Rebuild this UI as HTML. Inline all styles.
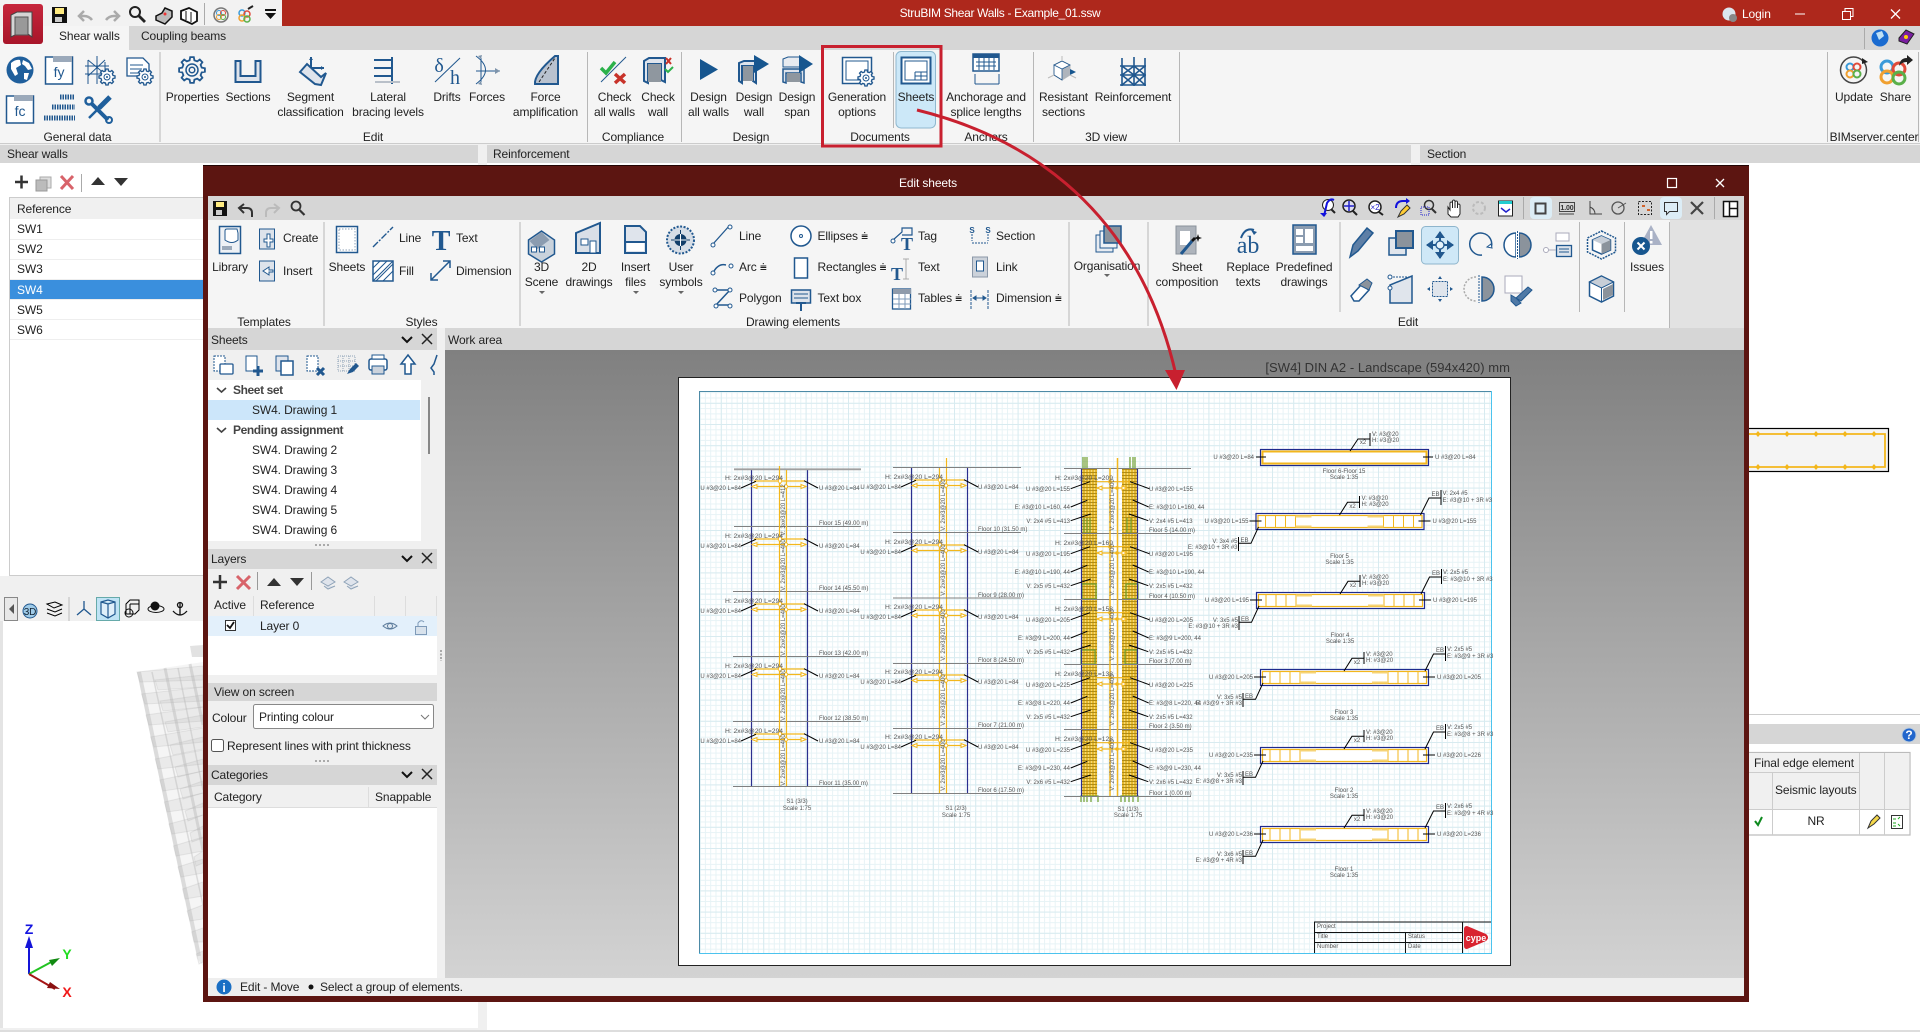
<!DOCTYPE html>
<html lang="en"><head><meta charset="utf-8"><title>StruBIM Shear Walls</title>
<style>
html,body{margin:0;padding:0;width:1920px;height:1032px;overflow:hidden;background:#fff}
svg{display:block}
text{font-family:"Liberation Sans",sans-serif;font-size:12px;fill:#222;letter-spacing:-.12px}
.m{text-anchor:middle}.e{text-anchor:end}.w{fill:#fff}.b{font-weight:bold;fill:#444;letter-spacing:-.4px}
.s{fill:none;stroke:#21588f;stroke-width:2}.s1{fill:none;stroke:#21588f;stroke-width:1}
.f{fill:#dfe4ec;stroke:#21588f;stroke-width:2}.g{fill:#8f979f;stroke:#21588f;stroke-width:1.5}
.d text{font-size:6px;fill:#555;letter-spacing:0}.d text.h{font-size:6.7px}
.y{fill:none;stroke:#f3b71c;stroke-width:1.2}.k{fill:none;stroke:#000;stroke-width:1}
.k2{fill:none;stroke:#111;stroke-width:2}.bl{fill:none;stroke:#2b2f8f;stroke-width:1.2}.fl{stroke:#808080;stroke-width:1}
</style></head><body>
<svg width="1920" height="1032" viewBox="0 0 1920 1032" xmlns="http://www.w3.org/2000/svg">
<defs>
<linearGradient id="cv" x1="0" y1="0" x2="0" y2="1"><stop offset="0" stop-color="#808080"/><stop offset="1" stop-color="#d3d3d3"/></linearGradient>
<linearGradient id="ab" x1="0" y1="0" x2="0" y2="1"><stop offset="0" stop-color="#c6263c"/><stop offset="1" stop-color="#a8162a"/></linearGradient>
<pattern id="gr" width="5.3" height="5.3" patternUnits="userSpaceOnUse"><path d="M0 .5H5.300M.5 0V5.300" stroke="#e7f3f6" stroke-width="1" fill="none"/></pattern>
<pattern id="gr2" width="21.2" height="21.2" patternUnits="userSpaceOnUse"><path d="M0 .5H21.200M.5 0V21.200" stroke="#d8ebf0" stroke-width="1" fill="none"/></pattern>
<pattern id="rb" width="3" height="3" patternUnits="userSpaceOnUse"><rect width="3" height="3" fill="#f4d974"/><path d="M1 0V3" stroke="#e0aa10" stroke-width="1.400"/><path d="M0 1.500H3" stroke="#a9860f" stroke-width=".9"/></pattern>
<g id="c1"><path class="y" d="M3 12H54M1 17.500H55"/><path d="M1 17.500l5-2v4zM55 17.500l-5-2v4zM29 9l2 3-2 3-2-3zM35 15l2 2.500-2 2.500-2-2.500z" fill="#fff" stroke="#f3b71c"/><path class="k" d="M-10 19L5 12.300M53 11.700L67 19"/></g>
<g id="c3"><path class="y" d="M15 13.700H48M15 20H45"/><path d="M15 20l5-2v4zM45 20l-5-2v4z" fill="#fff" stroke="#f3b71c"/><circle cx="28" cy="13.700" r="1.800" fill="#f3b71c"/><circle cx="35" cy="20" r="1.800" fill="#f3b71c"/><path class="k" d="M-11.300 20.700L8 13.700M48 13.700L67.300 20.700M-11.300 39L5.300 32.300M50.700 32L66.700 39M-11.300 52.700L8.700 46M47 46L66.300 52.700"/></g>
<g id="sec"><rect x=".5" y=".5" width="168" height="16" fill="#fff" stroke="#1e2a8e" stroke-width="1.200"/><rect x="2.500" y="2.500" width="164" height="12" fill="none" stroke="#f3b71c" stroke-width="1.200"/><path d="M10 3V14M20 3V14M30 3V14M40 3V14M128 3V14M138 3V14M148 3V14M158 3V14" stroke="#f3b71c" fill="none"/><path d="M40 3.500H56M40 13.500H56M112 3.500H128M112 13.500H128" stroke="#f6d376" stroke-width="2" fill="none"/><path class="k" d="M-6 8H6M163 8H175M84 2L92-10.700H104M104-17V-5M165 2L173.500-15H185.500M185.500-23V-8M3 14L-4.500 30.300H-17M-17 24V38"/></g>
<path id="x" d="M-5-5L5 5M5-5L-5 5" fill="none" stroke="#222" stroke-width="1.500"/>
<path id="v" d="M-5-3L0 2 5-3" fill="none" stroke="#111" stroke-width="2"/>
<path id="gp" d="M9.700-2.400L12.900-1.800V1.800L9.700 2.400 8.600 5.200 10.400 7.800 7.800 10.400 5.200 8.600 2.400 9.700 1.800 12.900H-1.800L-2.400 9.700-5.200 8.600-7.800 10.400-10.400 7.800-8.600 5.200-9.700 2.400-12.900 1.800V-1.800L-9.700-2.400-8.600-5.200-10.400-7.800-7.800-10.400-5.200-8.600-2.400-9.700-1.800-12.900H1.800L2.400-9.700 5.200-8.600 7.800-10.400 10.400-7.800 8.600-5.200Z"/>
<g id="gear"><use href="#gp" transform="scale(.62)" fill="#fff" stroke="#21588f" stroke-width="2.200"/><circle r="3" fill="none" stroke="#21588f"/><circle r="1" fill="#21588f"/></g>
</defs>

<!-- background -->
<rect width="1920" height="1032" fill="#f0f0f0"/>
<rect x="0" y="0" width="282" height="26" fill="#f2f2f2"/>
<rect x="282" y="0" width="1638" height="26" fill="#ae281c"/>
<rect x="129" y="26" width="1791" height="24" fill="#d6d6d6"/>
<rect x="0" y="26" width="129" height="24" fill="#f5f5f5"/>
<rect x="0" y="50" width="1920" height="94" fill="#f5f5f5"/>
<rect x="0" y="143" width="1920" height="1" fill="#ccc"/>
<rect x="0" y="145" width="478" height="18" fill="#d6d6d6"/>
<rect x="487" y="145" width="924" height="18" fill="#d6d6d6"/>
<rect x="1420" y="145" width="500" height="18" fill="#d6d6d6"/>
<rect x="0" y="163" width="478" height="865" fill="#fff"/>
<rect x="487" y="163" width="924" height="867" fill="#fff"/>
<rect x="1420" y="163" width="500" height="552" fill="#fff"/>
<rect x="1420" y="715" width="500" height="317" fill="#fff"/>
<rect x="487" y="1000" width="1433" height="30" fill="#fff"/>
<rect x="1420" y="714" width="500" height="1" fill="#ccc"/>
<rect x="1420" y="724" width="500" height="20" fill="#d6d6d6"/>

<!-- app button + qat -->
<rect x="3" y="4" width="40" height="40" rx="3" fill="url(#ab)"/>
<path d="M11 15L17 12H32V37L28 34V19H15V35L11 37Z" fill="#d5d5d5" stroke="#444"/><rect x="15" y="17" width="13" height="18" fill="#999" stroke="#555"/>
<g><rect x="52" y="7" width="15" height="16" fill="#111"/><rect x="55" y="8" width="9" height="6" fill="#ffeb80"/><rect x="55" y="17" width="7" height="5" fill="#ccc"/>
<path d="M84 21l-5-5 5-5M80 16h4q5 0 8 4" fill="none" stroke="#aaa" stroke-width="2.500"/><path d="M114 21l5-5-5-5M118 16h-4q-5 0-8 4" fill="none" stroke="#aaa" stroke-width="2.500"/>
<circle cx="135" cy="12" r="5" fill="none" stroke="#222" stroke-width="2"/><path d="M139 16l6 6" stroke="#222" stroke-width="2.800"/>
<path d="M156 16l6-3 3-5 7 3v6l-7 7-9-4z" fill="#bbb" stroke="#111" stroke-width="1.500"/><circle cx="165" cy="14" r="1.500" fill="#e33"/>
<path d="M181 11l8-3 8 4v9l-5 3-11-5z" fill="#fff" stroke="#111" stroke-width="1.800"/><path d="M186 11v9M191 12v10" stroke="#111"/>
<rect x="204" y="3" width="1" height="22" fill="#aaa"/>
<circle cx="221" cy="15" r="7" fill="none" stroke="#777" stroke-width="1.500"/><circle cx="219" cy="13" r="2.500" fill="none" stroke="#3a9ad9"/><circle cx="223" cy="13" r="2.500" fill="none" stroke="#e04a3a"/><circle cx="219" cy="17" r="2.500" fill="none" stroke="#f0a030"/><circle cx="223" cy="17" r="2.500" fill="none" stroke="#5ab04a"/>
<circle cx="242" cy="13" r="3" fill="none" stroke="#3a9ad9" stroke-width="1.500"/><circle cx="247" cy="14" r="3" fill="none" stroke="#e04a3a" stroke-width="1.500"/><circle cx="242" cy="18" r="3" fill="none" stroke="#f0a030" stroke-width="1.500"/><circle cx="247" cy="19" r="3" fill="none" stroke="#5ab04a" stroke-width="1.500"/><path d="M248 9l5-3" stroke="#222" stroke-width="2"/>
<path d="M265 9h11v2h-11zM265 13h11l-5.500 6z" fill="#111"/></g>
<text x="59" y="40">Shear walls</text><text x="141" y="40">Coupling beams</text>
<text x="1000" y="17" class="m w" style="letter-spacing:-.32px">StruBIM Shear Walls - Example_01.ssw</text>
<circle cx="1729" cy="14" r="6.500" fill="#dbe6ee"/><circle cx="1733" cy="18" r="4" fill="#888"/><text x="1742" y="18" class="w">Login</text>
<path d="M1795 14H1805" stroke="#fff"/><path d="M1842.500 11.500h8v8h-8zM1845 11v-2.500h8v8h-2.500" fill="none" stroke="#fff"/><path d="M1891 9.500l9 9M1900 9.500l-9 9" stroke="#fff" stroke-width="1.300"/>
<rect x="1864" y="28" width="1" height="21" fill="#aaa"/><circle cx="1880" cy="38" r="8.500" fill="#1a6bd0"/><path d="M1876 33l6-2 2 5-5 4z" fill="#bfe0f5"/><path d="M1899 38l7-8 8 4-7 10-8-3z" fill="#7b1fa2" stroke="#222"/><circle cx="1906" cy="37" r="2" fill="#ffd400"/>

<!-- main ribbon separators -->
<g fill="#b7b7b7"><rect x="159.500" y="52" width="1" height="90"/><rect x="587" y="52" width="1" height="90"/><rect x="681" y="52" width="1" height="90"/><rect x="893" y="52" width="1" height="76"/><rect x="1033" y="52" width="1" height="90"/><rect x="1179" y="52" width="1" height="90"/><rect x="1827" y="52" width="1" height="90"/><rect x="1918" y="52" width="1" height="90"/></g>
<rect x="896" y="51.500" width="39.500" height="76.500" rx="5" fill="#cce8f8" stroke="#8fb8cf"/>

<!-- main ribbon icons -->
<g>
<circle cx="20" cy="70" r="13.500" fill="#1f5f9c"/><path d="M11 63q5-4 9-3l1 5-5 3 2 6-3 2-4-7zM23 60l6 3 3 6-4 1-3-4-3-2zM24 73l5 0-2 7-3-1z" fill="#fff"/>
<path d="M45.500 57h27v27h-27z" fill="#fff" stroke="#21588f" stroke-width="1.500"/><path d="M53 56h19v6H53z" fill="#9ba9ba"/><text x="59" y="77" class="m" style="font-size:14px;fill:#21588f">fy</text>
<path class="s1" d="M88 84V60M97 84V56M105 84V62M85 66h24M85 74h18M88 60l17 14M105 60l-17 16" stroke-width="1.500"/><use href="#gear" x="107" y="77"/>
<path d="M127 58h16l6 6v12h-22z" fill="#fff" stroke="#21588f" stroke-width="1.300"/><path class="s1" d="M130 65h13M130 69h12M130 73h10"/><use href="#gear" x="145" y="77"/>
<path d="M6.500 96h27v27h-27z" fill="#fff" stroke="#21588f" stroke-width="1.500"/><path d="M14 95h19v6H14z" fill="#9ba9ba"/><text x="20" y="116" class="m" style="font-size:14px;fill:#21588f">fc</text>
<g stroke="#21588f" stroke-dasharray="1.500 1" fill="none"><path stroke-width="5" d="M60 97h15M52 107h23M44 118h31"/></g>
<path d="M92 104l16 16" stroke="#1f5f9c" stroke-width="4"/><circle cx="89" cy="101" r="3.500" fill="none" stroke="#1f5f9c" stroke-width="2.500"/><circle cx="109" cy="120" r="3" fill="none" stroke="#1f5f9c" stroke-width="2"/><path d="M89 118l11-11" stroke="#1f5f9c" stroke-width="2.500"/><path d="M99 108l11-11" stroke="#1f5f9c" stroke-width="5"/>
<g transform="translate(192 70)"><use href="#gp" fill="#f5f5f5" stroke="#21588f" stroke-width="1.800"/><circle r="6" fill="none" stroke="#21588f" stroke-width="1.500"/><circle r="2.800" fill="none" stroke="#21588f" stroke-width="1.500"/></g>
<path class="f" d="M235.500 61v21h25V61h-5v15h-15V61z"/>
<path class="f" d="M300 72l7-8 14 13 5-4-5 12-6-1zM311 68V57M311 68h13"/>
<path d="M311 57l-2 3h4zM324 68l-3-2v4z" fill="#21588f"/>
<path class="s" d="M392 57V84M374 60h18M374 68h18M374 76h18"/><path d="M375 82h25" stroke="#b9c0c9" stroke-width="2"/>
<text x="439" y="72" class="m" style="font-family:'Liberation Serif',serif;font-size:20px;fill:#21588f">δ</text><path class="s1" d="M435 82L460 58"/><text x="455" y="84" class="m" style="font-family:'Liberation Serif',serif;font-size:20px;fill:#21588f">h</text>
<path class="s1" d="M476 56q19 14 0 28M476 71h24M481 58v24" stroke-width="1.500"/><path d="M500 71l-5-3v6zM478 56l4-1-1 4zM478 84l4 1-1-4z" fill="#7e94ab"/>
<path d="M535 84q-1-10 20-28l3 0V84z" fill="#b9c2cf" stroke="#21588f" stroke-width="2"/><path d="M539 82l16-24" stroke="#222" stroke-dasharray="3 2" fill="none"/>
<path d="M601 68l5 5 9-11" stroke="#2bb14a" stroke-width="3.500" fill="none"/><path d="M601 82l25-25" stroke="#21588f"/><path d="M615 74l10 9M625 74l-10 9" stroke="#c8332a" stroke-width="3.500"/>
<path class="f" d="M644 61l5-3h16v24l-4-2V64h-13v19l-4-2z"/><rect x="648" y="64" width="13" height="18" fill="#8f979f"/><path d="M666 58l5 6M671 58l-5 6" stroke="#c8332a" stroke-width="2"/><path d="M665 69l3 3 5-5" stroke="#2bb14a" stroke-width="2" fill="none"/>
<path d="M700 59l18 10.500-18 10.500z" fill="#17568f"/>
<path class="f" d="M739 63l5-2h12v22l-3-2V66h-11v17l-3-2z"/><rect x="743" y="66" width="10" height="15" fill="#8f979f"/><path d="M754 55l15 9-15 9z" fill="#17568f"/>
<path class="f" style="fill:#e8ebf0;stroke-width:1" d="M783 59l5-2h12v10H783z"/><path class="f" style="stroke-width:1.500" d="M783 69h21v14l-3-1V73h-15v10l-3-1z"/><rect x="787" y="73" width="13" height="9" fill="#8f979f"/><path d="M799 55l14 9-14 9z" fill="#17568f"/>
<rect x="842.500" y="57.500" width="29" height="26" fill="#fff" stroke="#21588f" stroke-width="1.500"/><rect x="846" y="61" width="22" height="19" fill="none" stroke="#21588f"/><use href="#gear" x="866" y="78" />
<rect x="901.500" y="57.500" width="29" height="26" fill="#fff" stroke="#21588f" stroke-width="2"/><rect x="905" y="61" width="22" height="19" fill="none" stroke="#21588f"/><path class="s1" d="M915 72h12M915 76h12M915 72v8M921 72v8"/>
<rect x="973" y="54" width="26" height="17" fill="#fff" stroke="#21588f" stroke-width="1.500"/><rect x="973" y="54" width="26" height="4" fill="#21588f"/><path d="M976 62h20M976 66h20M979 58v12M984 58v12M989 58v12M994 58v12" stroke="#21588f"/><path class="s1" d="M975 74v10M999 74v10M975 84h24"/>
<path style="stroke:#bbb;stroke-width:1;fill:#fff" d="M1054 65l8-4 8 4v10l-8 5-8-5z"/><path d="M1062 69l8-4v10l-8 5z" fill="#aeb4bc"/><path d="M1054 65l8 4v11l-8-5zM1054 65l8-4 8 4-8 4z" fill="none" stroke="#21588f" stroke-width=".8"/><path d="M1070 69l6 3-6 3z" fill="#17568f"/><path stroke="#bbb" d="M1062 56v5M1048 78l6-3M1076 78l-6-3"/>
<path class="s1" style="stroke-width:1.600" d="M1122 58v28M1134 57v29M1145 58v28M1120 66h26M1120 75h26M1120 85h26M1122 66l12 9M1134 66l-12 9M1134 66l11 9M1145 66l-11 9M1122 75l12 10M1134 75l-12 10M1134 75l11 10M1145 75l-11 10"/>
<circle cx="1853.500" cy="70" r="13" fill="none" stroke="#444" stroke-width="1.500"/><path d="M1862 58l6 4-6 2z" fill="#222"/><circle cx="1850" cy="67" r="3.500" fill="none" stroke="#3a9ad9" stroke-width="2"/><circle cx="1857" cy="67" r="3.500" fill="none" stroke="#e04a3a" stroke-width="2"/><circle cx="1850" cy="74" r="3.500" fill="none" stroke="#f0a030" stroke-width="2"/><circle cx="1857" cy="74" r="3.500" fill="none" stroke="#5ab04a" stroke-width="2"/>
<circle cx="1887" cy="67" r="6" fill="none" stroke="#3a9ad9" stroke-width="3"/><circle cx="1899" cy="69" r="6" fill="none" stroke="#e04a3a" stroke-width="3"/><circle cx="1887" cy="77" r="6" fill="none" stroke="#f0a030" stroke-width="3"/><circle cx="1899" cy="78" r="6" fill="none" stroke="#5ab04a" stroke-width="3"/><path d="M1899 66q1-8 8-8v-3l6 5-6 5v-3q-5 0-8 4z" fill="#222"/>
</g>

<!-- main ribbon labels -->
<g class="m" text-anchor="middle">
<text x="192.500" y="101">Properties</text><text x="248" y="101">Sections</text><text x="310.500" y="101">Segment</text><text x="310.500" y="116">classification</text>
<text x="388" y="101">Lateral</text><text x="388" y="116">bracing levels</text><text x="447" y="101">Drifts</text><text x="487" y="101">Forces</text>
<text x="545.500" y="101">Force</text><text x="545.500" y="116">amplification</text><text x="614.500" y="101">Check</text><text x="614.500" y="116">all walls</text>
<text x="658" y="101">Check</text><text x="658" y="116">wall</text><text x="708.500" y="101">Design</text><text x="708.500" y="116">all walls</text>
<text x="754" y="101">Design</text><text x="754" y="116">wall</text><text x="797" y="101">Design</text><text x="797" y="116">span</text>
<text x="857" y="101">Generation</text><text x="857" y="116">options</text><text x="916" y="101">Sheets</text>
<text x="986" y="101">Anchorage and</text><text x="986" y="116">splice lengths</text><text x="1063.500" y="101">Resistant</text><text x="1063.500" y="116">sections</text><text x="1133" y="101">Reinforcement</text>
<text x="1854" y="101">Update</text><text x="1895.500" y="101">Share</text>
<text x="77.500" y="141">General data</text><text x="373" y="141">Edit</text><text x="633" y="141">Compliance</text><text x="751" y="141">Design</text><text x="880" y="141">Documents</text><text x="986" y="141">Anchors</text><text x="1106" y="141">3D view</text><text x="1874" y="141">BIMserver.center</text>
</g>
<text x="7" y="158">Shear walls</text><text x="493" y="158">Reinforcement</text><text x="1427" y="158">Section</text>

<!-- left panel -->
<path d="M15 182h13M21.500 175.500v13" stroke="#333" stroke-width="2.500"/><rect x="40" y="177" width="11" height="11" fill="#ddd" stroke="#aaa"/><rect x="36" y="180" width="11" height="11" fill="#bbb" stroke="#999"/><path d="M61 176l12 13M73 176l-12 13" stroke="#d8636a" stroke-width="3"/><rect x="81" y="174" width="1" height="18" fill="#aaa"/><path d="M91 185l7-8 7 8zM114 178h14l-7 8z" fill="#333"/>
<rect x="9.500" y="197.500" width="468" height="378" fill="#fff" stroke="#ccc"/>
<rect x="10" y="198" width="467" height="21" fill="#f0f0f0"/><text x="17" y="213">Reference</text>
<rect x="10" y="280" width="200" height="19" fill="#3a8fdd"/>
<g stroke="#eee"><path d="M10 239.500H203M10 259.500H203M10 279.500H203M10 299.500H203M10 319.500H203M10 339.500H203"/></g>
<text x="17" y="233">SW1</text><text x="17" y="253">SW2</text><text x="17" y="273">SW3</text><text x="17" y="294" class="w">SW4</text><text x="17" y="314">SW5</text><text x="17" y="334">SW6</text>
<rect x="0" y="576" width="478" height="17" fill="#f0f0f0"/>
<rect x="0" y="593" width="478" height="28" fill="#f0f0f0"/><rect x="0" y="621" width="3" height="407" fill="#e4e4e4"/>
<rect x="4.500" y="597.500" width="13" height="23" fill="#e8e8e8" stroke="#888"/><path d="M14 604l-5 5 5 5z" fill="#555"/>
<circle cx="30" cy="611" r="7" fill="#9fcbe8" stroke="#21588f"/><text x="30" y="615" class="m" style="font-size:10px;fill:#123">3D</text>
<path class="k" d="M47 604l8-2 7 3-8 3zM47 609l8 3 7-3M47 613l8 3 7-3" stroke-width="1.200"/><rect x="68.500" y="597" width="1" height="24" fill="#bbb"/>
<path d="M84 609v-8M84 609l-7 6M84 609l7 6" stroke="#21588f" fill="none" stroke-width="1.300"/>
<rect x="96.500" y="597.500" width="23" height="23" fill="#bfe3f5" stroke="#6aa"/><path d="M101 602l7-2 7 2v12l-7 4-7-4zM108 604v14M101 602l7 2 7-2" fill="#dfeffa" stroke="#21588f" stroke-width="1.200"/>
<path class="k" d="M126 604l4-4h9v10l-4 4h-9zM130 604h9M130 604v10M126 604" stroke-width="1.200"/><circle cx="129" cy="613" r="4" fill="none" stroke="#111"/>
<ellipse cx="156" cy="609" rx="8" ry="3.500" fill="none" stroke="#111"/><circle cx="155" cy="606" r="4.500" fill="#111"/>
<circle cx="180" cy="605" r="2.500" fill="none" stroke="#111" stroke-width="1.300"/><path d="M180 603v12M173 611q7 8 14 0" fill="none" stroke="#111" stroke-width="1.300"/>
<!-- 3D building -->
<path d="M137 672L203 662V966L197 958Z" fill="#d0d0d0" fill-opacity=".22"/>
<path d="M190 646l13-1v12h-11z" fill="#e2e2e2"/>
<g fill="#808080" fill-opacity=".09" stroke="#a8a8a8" stroke-opacity=".22">
<path d="M137 672L203 666V680L140 682Z"/><path d="M141.600 694L203 687V701L145 704Z"/><path d="M146 715L203 707V721L149 725Z"/><path d="M150.700 737L203 728V742L154 747Z"/><path d="M155.300 759L203 750V764L158 769Z"/><path d="M159.800 780L203 771V785L163 791Z"/><path d="M164.400 802L203 793V807L167 812Z"/><path d="M169 824L203 815V829L172 834Z"/><path d="M173.500 846L203 837V851L176 856Z"/><path d="M178 867L203 859V873L181 877Z"/><path d="M182.600 889L203 882V896L185 899Z"/><path d="M187.200 911L203 905V919L190 921Z"/><path d="M191.700 932L203 928V942L194 942Z"/><path d="M196.300 954L203 951V962L199 964Z"/>
<path d="M155 680L203 675V687L158 690Z"/><path d="M160 701L203 695V707L163 711Z"/><path d="M165 722L203 715V727L168 732Z"/><path d="M170 745L203 737V749L173 755Z"/><path d="M175 767L203 759V771L178 777Z"/><path d="M180 789L203 781V793L183 799Z"/><path d="M185 811L203 803V815L188 821Z"/><path d="M190 833L203 826V838L192 842Z"/><path d="M194 857L203 851V863L196 866Z"/>
</g>
<g fill="none" stroke="#b5b5b5" stroke-opacity=".4"><path d="M139 672L199 956" stroke-width="4"/><path d="M152 672L203 905" stroke-width="1.500"/><path d="M165 668L203 850" stroke-width="3"/><path d="M178 668L203 790" stroke-width="1.500"/><path d="M190 664L203 725" stroke-width="3"/></g>
<!-- axes -->
<path d="M29 974V945" stroke="#1414d8" stroke-width="2"/><path d="M29 936l-4 12h8z" fill="#1414d8"/><text x="29" y="934" class="m" style="font-size:14px;font-weight:bold;fill:#1414e0">Z</text>
<path d="M29 974L55 960" stroke="#22c322" stroke-width="2"/><path d="M60 958l-11 2 3 6z" fill="#118a11"/><text x="67" y="959" class="m" style="font-size:14px;font-weight:bold;fill:#22dd22">Y</text>
<path d="M29 974L55 989" stroke="#a51414" stroke-width="2"/><path d="M60 989l-10-7-3 6z" fill="#8a1010"/><text x="67" y="997" class="m" style="font-size:14px;font-weight:bold;fill:#f01818">X</text>

<!-- right side section preview -->
<rect x="1740" y="428.500" width="148.500" height="43" fill="#f4f4f4" stroke="#000" stroke-width="1.200"/>
<path d="M1740 434H1885V467H1740" fill="none" stroke="#f3b71c" stroke-width="1.800"/>
<g fill="#f3b71c"><path d="M1758 431l2.500 3-2.500 3-2.500-3zM1787 431l2.500 3-2.500 3-2.500-3zM1816 431l2.500 3-2.500 3-2.500-3zM1845 431l2.500 3-2.500 3-2.500-3zM1874 431l2.500 3-2.500 3-2.500-3zM1758 464l2.500 3-2.500 3-2.500-3zM1787 464l2.500 3-2.500 3-2.500-3zM1816 464l2.500 3-2.500 3-2.500-3zM1845 464l2.500 3-2.500 3-2.500-3zM1874 464l2.500 3-2.500 3-2.500-3z"/></g>
<circle cx="1909" cy="735" r="7" fill="#2266cc" stroke="#bcd"/><text x="1909" y="739" class="m w" style="font-weight:bold">?</text>
<rect x="1745" y="752.500" width="165" height="82.500" fill="#fff" stroke="#bbb" stroke-width="1.200"/><rect x="1745" y="753" width="164" height="56" fill="#f0f0f0"/>
<g stroke="#ccc" fill="none"><path d="M1745 772.500H1859M1745 809.500H1910M1772.500 772V835M1859.500 753V835M1884.500 753V835"/></g>
<text x="1754" y="767">Final edge element</text><text x="1775" y="794">Seismic layouts</text><text x="1816" y="825" class="m">NR</text>
<path d="M1755 821l3 4 4-8" fill="none" stroke="#0e8a1e" stroke-width="2"/><path d="M1868 828l3-7 6-6 3 3-6 6z" fill="#f5d84a" stroke="#333"/><rect x="1891.500" y="815.500" width="11" height="13" fill="#fff" stroke="#333"/><path d="M1893 819h3M1893 823h3M1893 826h3M1898 819l2-2M1898 824l2 2" stroke="#2a2"/>

<!-- Edit sheets window -->
<rect x="203" y="165" width="1546" height="837" fill="#5c1511"/>
<rect x="203" y="165" width="1546" height="1" fill="#220504"/>
<rect x="208" y="196" width="1536" height="800" fill="#f0f0f0"/>
<text x="928" y="187" class="m w">Edit sheets</text>
<rect x="1667.500" y="178.500" width="9" height="9" fill="none" stroke="#fff" stroke-width="1.200"/><path d="M1716 179l8 8M1724 179l-8 8" stroke="#fff" stroke-width="1.300"/>
<rect x="208" y="196" width="1536" height="24" fill="#d6d6d6"/>
<rect x="208" y="220" width="1462" height="108" fill="#f5f5f5"/><rect x="1670" y="220" width="74" height="108" fill="#e2e2e2"/>
<rect x="208" y="328" width="229" height="22" fill="#d6d6d6"/><rect x="445" y="328" width="1299" height="22" fill="#d6d6d6"/>
<rect x="445" y="350" width="1299" height="628" fill="url(#cv)"/>
<rect x="208" y="978" width="1536" height="18" fill="#eee"/>
<!-- window qat -->
<rect x="213" y="201" width="14" height="15" fill="#111"/><rect x="216" y="202" width="8" height="5" fill="#ffeb80"/><rect x="216" y="210" width="6" height="5" fill="#ccc"/>
<path d="M244 213l-5-5 5-4M240 208h7q5 0 5 5v4" fill="none" stroke="#333" stroke-width="2"/><path d="M274 213l5-5-5-4M278 208h-7q-5 0-5 5v4" fill="none" stroke="#bbb" stroke-width="2"/>
<circle cx="296" cy="206" r="4.500" fill="none" stroke="#333" stroke-width="1.800"/><path d="M299.500 210l5 5" stroke="#333" stroke-width="2.200"/>
<g>
<circle cx="1328" cy="205" r="5.500" fill="#fff" stroke="#222"/><path d="M1324 216l3-13q3-5 7-3" fill="none" stroke="#11d" stroke-width="2"/><path d="M1320 213l4 4 3-4z" fill="#11d"/><path d="M1331 209l4 4" stroke="#222" stroke-width="2"/>
<circle cx="1349" cy="206" r="6" fill="#dde" stroke="#222" stroke-width="1.500"/><path d="M1349 201v10M1344 206h10" stroke="#22c" stroke-width="1.500"/><path d="M1353 211l4 4" stroke="#222" stroke-width="2"/>
<circle cx="1375" cy="207" r="6" fill="#fff" stroke="#222" stroke-width="1.500"/><text x="1375" y="210" class="m" style="font-size:8px;fill:#22c">×2</text><path d="M1379 212l4 3" stroke="#222" stroke-width="2"/>
<path d="M1396 208q0-7 7-7h4" fill="none" stroke="#11d" stroke-width="2"/><path d="M1410 201l-4-3v6z" fill="#11d"/><path d="M1398 217l3-6 6-6 3 3-6 6z" fill="#fc3" stroke="#333"/>
<circle cx="1429" cy="205" r="4.500" fill="none" stroke="#333" stroke-width="1.500"/><path d="M1432 209l4 4" stroke="#333" stroke-width="2"/><rect x="1421" y="207" width="8" height="8" fill="none" stroke="#22c" stroke-dasharray="1 1"/>
<path d="M1448 207v7l3 3h7l2-3v-9a1.300 1.300 0 0 0-2.500 0v3-6a1.300 1.300 0 0 0-2.500 0v6-7a1.300 1.300 0 0 0-2.500 0v7-5a1.300 1.300 0 0 0-2.500 0v7z" fill="#fff" stroke="#222"/>
<circle cx="1479" cy="208" r="6" fill="none" stroke="#bbb" stroke-width="2" stroke-dasharray="3 2"/>
<rect x="1498.500" y="201" width="14" height="15" fill="#fff" stroke="#222"/><rect x="1499" y="201" width="13" height="3" fill="#22ccd0"/><path d="M1501 208l5 4 4-3" fill="none" stroke="#22c" stroke-width="1.500"/>
<rect x="1523" y="197" width="1" height="22" fill="#aaa"/>
<rect x="1530" y="197" width="22" height="22" rx="4" fill="#dcedf6"/><rect x="1535.500" y="203.500" width="10" height="10" fill="none" stroke="#444" stroke-width="2"/>
<rect x="1559.500" y="202.500" width="15" height="9" fill="none" stroke="#444"/><text x="1567" y="210" class="m" style="font-size:7px;font-weight:bold;fill:#333">1.00</text><path d="M1559 214h15" stroke="#444"/>
<path d="M1590 201v13h12M1590 207q5 2 5 7" fill="none" stroke="#444"/>
<circle cx="1618" cy="208" r="6" fill="none" stroke="#555" stroke-width="1.300"/><path d="M1618 208l8-5" stroke="#555"/>
<rect x="1638.500" y="201.500" width="13" height="13" fill="none" stroke="#222" stroke-dasharray="2 1.500"/><rect x="1642" y="205" width="3" height="2" fill="#d2622a"/><rect x="1647" y="209" width="3" height="2" fill="#d2622a"/>
<rect x="1660" y="197" width="22" height="22" rx="4" fill="#dcedf6"/><path d="M1664.500 202.500h13v9h-8l-3 3v-3h-2z" fill="none" stroke="#333"/>
<path d="M1691 202l12 12M1703 202l-12 12" stroke="#444" stroke-width="2.200"/>
<rect x="1714" y="197" width="1" height="22" fill="#aaa"/>
<path d="M1723.500 201.500h6v15h-6zM1729.500 201.500h8v7h-8zM1729.500 208.500h8v8h-8z" fill="#fff" stroke="#111" stroke-width="1.500"/>
</g>
<!-- window ribbon seps -->
<g fill="#b7b7b7"><rect x="323.500" y="222" width="1" height="104"/><rect x="519.500" y="222" width="1" height="104"/><rect x="1068.500" y="222" width="1" height="104"/><rect x="1147.500" y="222" width="1" height="104"/><rect x="1339.500" y="222" width="1" height="90"/><rect x="1579" y="222" width="1" height="90"/><rect x="1624" y="222" width="1" height="90"/><rect x="1669" y="222" width="1" height="106"/></g>
<rect x="1421.500" y="226.500" width="37" height="37.500" rx="4" fill="#cfe8f7" stroke="#8eb5cc"/>
<!-- window ribbon icons -->
<g>
<rect x="219.500" y="226.500" width="21" height="27" fill="#eef1f5" stroke="#21588f" stroke-width="1.500"/><path d="M225 240v-9q0-2 2-2h10l1 4v7q-6 5-13 0z" fill="#fff" stroke="#21588f"/><rect x="222" y="246" width="10" height="4" fill="#9ba9ba"/>
<rect x="259.500" y="229" width="15" height="20" fill="#dde3eb" stroke="#21588f"/><path d="M264 239h3v-5h3v5h3v3h-3v5h-3v-5h-3z" fill="#fff" stroke="#21588f"/>
<rect x="259.500" y="261" width="15" height="20" fill="#dde3eb" stroke="#21588f"/><path d="M273 270h-4v-3l-6 4 6 4v-3h4z" fill="#fff" stroke="#21588f"/>
<rect x="336.500" y="226.500" width="21" height="26" fill="#fff" stroke="#21588f" stroke-width="1.500"/><rect x="339" y="229" width="16" height="21" fill="none" stroke="#8fa3b8" stroke-dasharray="1.500 1.500"/>
<path d="M373 247l20-20" stroke="#21588f" stroke-dasharray="7 1.500 2 1.500" fill="none" stroke-width="1.400"/>
<rect x="373" y="261" width="20" height="20" fill="#fff" stroke="#21588f" stroke-width="1.500"/><path d="M373 268l7-7M373 275l14-14M376 281l17-17M383 281l10-10M373 281l20-20" stroke="#21588f" fill="none"/>
<text x="441" y="250" class="m" style="font-family:'Liberation Serif',serif;font-weight:bold;font-size:28px;fill:#21588f">T</text>
<path class="s1" style="stroke-width:1.500" d="M431 280l19-19M431 273v7h7M443 261h7v7"/>
<g transform="translate(541.500 245)"><path d="M-13-5L0-14 13-5V9L0 17-13 9z" fill="#c9d2dc" stroke="#21588f" stroke-width="1.500"/><path d="M-12-4L0-13 8-5-4 4z" fill="#8b9cb0"/><rect x="-10" y="2" width="5" height="5" fill="#fff" stroke="#21588f"/><rect x="-2" y="2" width="5" height="5" fill="#fff" stroke="#21588f"/></g>
<path class="f" style="fill:#d9dfe7" d="M576 233l24-10v30h-24z"/><rect x="581" y="239" width="7" height="6" fill="#fff" stroke="#21588f"/><rect x="590" y="241" width="6" height="12" fill="#fff" stroke="#21588f"/>
<path class="f" d="M625 226h15l6 6v21h-21z"/><rect x="627" y="243" width="17" height="8" fill="#fff"/><path d="M625 242h21" stroke="#21588f" stroke-width="2"/>
<circle cx="680.500" cy="240" r="13.500" fill="#d6dde6" stroke="#21588f" stroke-width="2" stroke-dasharray="2 1.500"/><circle cx="680.500" cy="240" r="6" fill="#123e6a"/><path d="M680.500 230v20M671 240h19" stroke="#123e6a"/><path d="M680.500 234v12M674.500 240h12" stroke="#fff"/>
<path d="M713 244l17-19" stroke="#21588f" fill="none" stroke-width="1.300"/><circle cx="713" cy="245" r="2" fill="#fff" stroke="#21588f"/><circle cx="730" cy="227" r="2" fill="#fff" stroke="#21588f"/>
<path d="M713 273q5-10 13-8" stroke="#21588f" fill="none" stroke-width="1.500"/><circle cx="713" cy="273" r="2" fill="#fff" stroke="#21588f"/><circle cx="731" cy="266" r="2" fill="#fff" stroke="#21588f"/>
<path class="s1" style="stroke-width:1.500" d="M715 290h15L716 305h14"/><circle cx="715" cy="290" r="2" fill="#fff" stroke="#21588f"/><circle cx="730" cy="290" r="2" fill="#fff" stroke="#21588f"/><circle cx="716" cy="306" r="2" fill="#fff" stroke="#21588f"/><circle cx="730" cy="306" r="2" fill="#fff" stroke="#21588f"/>
<circle cx="801" cy="236" r="10" fill="#fff" stroke="#21588f" stroke-width="1.500"/><circle cx="801" cy="236" r="1.500" fill="none" stroke="#21588f"/>
<rect x="794.500" y="258" width="13" height="20" fill="#fff" stroke="#21588f" stroke-width="1.500"/>
<rect x="791.500" y="290" width="19" height="13" fill="#dde3eb" stroke="#21588f" stroke-width="1.500"/><path d="M794 294h14M794 298h14" stroke="#21588f"/><path d="M796 303h10M801 303v8" stroke="#21588f" stroke-width="2"/>
<path class="s1" style="stroke-width:1.200" d="M893 240l9-8v-4h10v7h-10"/><circle cx="893" cy="241" r="2" fill="#fff" stroke="#21588f"/><text x="907" y="250" class="m" style="font-family:'Liberation Serif',serif;font-weight:bold;font-size:18px;fill:#21588f">T</text>
<text x="897" y="280" class="m" style="font-family:'Liberation Serif',serif;font-weight:bold;font-size:18px;fill:#21588f">T</text><path d="M906 259v20M903 259h6M903 279h6" stroke="#aaa"/>
<rect x="892.500" y="289" width="18" height="20" fill="#fff" stroke="#21588f" stroke-width="1.300"/><rect x="893" y="289" width="18" height="5" fill="#8f9bab"/><path d="M893 299h18M893 304h18M899 294v15M905 294v15" stroke="#7e9ab8"/>
<text x="972" y="233" class="m" style="font-size:8px;font-weight:bold;fill:#21588f">S</text><text x="988" y="233" class="m" style="font-size:8px;font-weight:bold;fill:#21588f">S</text><path d="M972 234v7M988 234v7M972 243h16" stroke="#21588f" stroke-dasharray="2 1" fill="none"/>
<rect x="972.500" y="257" width="15" height="20" fill="#ccd2da" stroke="#8b98a8"/><rect x="976.500" y="261" width="7" height="10" fill="#fff" stroke="#21588f"/>
<path d="M971 290v20M988 290v20" stroke="#21588f" stroke-dasharray="3 1" fill="none"/><path d="M973 298h13M973 298l3-2v4zM986 298l-3-2v4z" stroke="#21588f" fill="#21588f"/>
<path class="f" style="stroke-width:1;fill:#e8ecf2" d="M1096 235h17v17h-17z"/><path class="f" style="stroke-width:1;fill:#eef1f5" d="M1100 231h17v17h-17z"/><rect x="1104" y="226" width="17" height="17" fill="#8b939c" stroke="#21588f" stroke-width="1.500"/>
<rect x="1176" y="226" width="20" height="28" fill="#aeb4bc" stroke="#8a929b"/><rect x="1180" y="231" width="10" height="14" fill="#fff"/><path d="M1181 254l11-13" stroke="#21588f" stroke-width="3"/><path d="M1191 240l3-3 2 2-3 3z" fill="#111"/><path d="M1198 234l1 3 3 1-3 1-1 3-1-3-3-1 3-1z" fill="#111"/>
<path d="M1241 238q4-11 13-8" fill="none" stroke="#21588f" stroke-width="2"/><path d="M1257 232l-6-2 3 5z" fill="#21588f"/><text x="1248" y="253" class="m" style="font-family:'Liberation Serif',serif;font-size:24px;fill:#21588f">ab</text>
<rect x="1293" y="225" width="23" height="29" fill="#8b9cb0" stroke="#21588f" stroke-width="1.500"/><rect x="1296" y="229" width="7" height="6" fill="#fff"/><rect x="1296" y="237" width="7" height="6" fill="#fff"/><rect x="1305" y="229" width="8" height="14" fill="#fff"/><rect x="1296" y="246" width="17" height="5" fill="#fff"/>
<path d="M1350 257l3-12 14-17 6 5-15 18z" fill="#5e7fa6" stroke="#21588f" stroke-width="1.500"/>
<rect x="1389" y="238" width="17" height="17" fill="#e0e5ec" stroke="#21588f" stroke-width="1.500"/><rect x="1396" y="231" width="17" height="17" fill="#8b939c" stroke="#21588f" stroke-width="2"/>
<path d="M1440 232v26M1427 245h26" stroke="#21588f" stroke-width="2"/><path d="M1440 231l-5 7h10zM1440 259l-5-7h10zM1426 245l7-5v10zM1454 245l-7-5v10z" fill="#21588f"/><circle cx="1440" cy="245" r="4" fill="#e6f3fb" stroke="#21588f" stroke-width="1.300"/>
<path d="M1482 255a11 11 0 1 1 9-7" fill="none" stroke="#21588f" stroke-width="1.500"/><path d="M1487 247l5 1-1-4z" fill="#fff" stroke="#21588f"/>
<path d="M1516 233a12 12 0 0 0 0 24z" fill="#fff" stroke="#21588f" stroke-width="1.500"/><path d="M1519 233a12 12 0 0 1 0 24z" fill="#8b939c" stroke="#21588f" stroke-width="1.500"/><path d="M1517.500 231v28" stroke="#fff" stroke-width="3"/><path d="M1517.500 231v28" stroke="#21588f" stroke-dasharray="2 1"/>
<rect x="1556" y="233" width="13" height="8" fill="#fff" stroke="#aab"/><rect x="1556.500" y="245.500" width="15" height="11" fill="#dde3eb" stroke="#21588f" stroke-width="1.300"/><path d="M1559 249h10M1559 252h10" stroke="#21588f"/><circle cx="1546" cy="250" r="2.500" fill="#fff" stroke="#aab"/><path d="M1549 250h7" stroke="#aab"/>
<path d="M1354 301l-3-5 10-11 8 5-10 11z" fill="#fff" stroke="#21588f" stroke-width="1.500"/><path d="M1359 285l8-6 5 4-3 7z" fill="#8b939c" stroke="#21588f"/>
<path d="M1390 303v-18l22-9v27z" fill="#e0e5ec" stroke="#21588f" stroke-width="1.500"/><path d="M1390 277h20" stroke="#21588f" stroke-dasharray="2 1"/><circle cx="1390" cy="277" r="2" fill="#fff" stroke="#21588f"/><circle cx="1390" cy="288" r="2" fill="#fff" stroke="#21588f"/>
<rect x="1432.500" y="281.500" width="15" height="15" fill="#e0e5ec" stroke="#21588f" stroke-dasharray="2 1"/><path d="M1440 276l-2 3h4zM1440 302l-2-3h4zM1427 289l3-2v4zM1453 289l-3-2v4z" fill="#21588f"/>
<path d="M1476 277a12 12 0 0 0 0 24" fill="none" stroke="#aaa" stroke-dasharray="2 1.500" stroke-width="1.500"/><path d="M1482 277a12 12 0 0 1 0 24z" fill="#8b939c" stroke="#21588f" stroke-width="1.500"/><path d="M1479 275v28" stroke="#21588f" stroke-dasharray="2 1"/>
<rect x="1505" y="276" width="17" height="17" fill="#fff" stroke="#aab"/><path d="M1516 298l12-11 4 3-11 11zM1511 295l5 3 5 5-5 3-5-5z" fill="#4f79a6" stroke="#21588f"/>
<path d="M1601.500 231l14 7v14l-14 7-14-7v-14z" fill="none" stroke="#21588f" stroke-width="1.500" stroke-dasharray="2 1"/><path d="M1601.500 236l9 4v10l-9 4-9-4v-10z" fill="#fff" stroke="#21588f" stroke-width="1.500"/><path d="M1592.500 240l9 4 9-4-9-4z" fill="#c7ced7"/><path d="M1601.500 244l9-4v10l-9 4z" fill="#8b939c"/>
<path d="M1601.500 276l12 6v14l-12 6-12-6v-14z" fill="#fff" stroke="#21588f" stroke-width="1.500"/><path d="M1589.500 282l12 6 12-6-12-6z" fill="#c7ced7" stroke="#21588f"/><path d="M1603 289l10-5v11l-10 5z" fill="#8b939c"/><path d="M1601.500 288v14" stroke="#21588f"/>
<path d="M1651 225l11 20h-22z" fill="#aab2c6"/><rect x="1650" y="231" width="2.500" height="8" fill="#fff"/><rect x="1650" y="241" width="2.500" height="2.500" fill="#fff"/><circle cx="1641" cy="246" r="9" fill="#17568f"/><path d="M1637.500 242.500l7 7M1644.500 242.500l-7 7" stroke="#fff" stroke-width="2"/>
</g>
<!-- window ribbon text -->
<g text-anchor="middle">
<text x="230" y="271">Library</text><text x="347" y="271">Sheets</text><text x="541.500" y="271">3D</text><text x="541.500" y="286">Scene</text><text x="589" y="271">2D</text><text x="589" y="286">drawings</text><text x="635.500" y="271">Insert</text><text x="635.500" y="286">files</text><text x="681" y="271">User</text><text x="681" y="286">symbols</text>
<text x="1107" y="270">Organisation</text><text x="1187" y="271">Sheet</text><text x="1187" y="286">composition</text><text x="1248" y="271">Replace</text><text x="1248" y="286">texts</text><text x="1304" y="271">Predefined</text><text x="1304" y="286">drawings</text><text x="1647" y="271">Issues</text>
<text x="264" y="326">Templates</text><text x="421.500" y="326">Styles</text><text x="793" y="326">Drawing elements</text><text x="1408" y="326">Edit</text>
</g>
<text x="283" y="242">Create</text><text x="283" y="275">Insert</text><text x="399" y="242">Line</text><text x="399" y="275">Fill</text><text x="456" y="242">Text</text><text x="456" y="275">Dimension</text>
<text x="739" y="240">Line</text><text x="739" y="271">Arc ⩧</text><text x="739" y="302">Polygon</text><text x="817.500" y="240">Ellipses ⩧</text><text x="817.500" y="271">Rectangles ⩧</text><text x="817.500" y="302">Text box</text>
<text x="918" y="240">Tag</text><text x="918" y="271">Text</text><text x="918" y="302">Tables ⩧</text><text x="996" y="240">Section</text><text x="996" y="271">Link</text><text x="996" y="302">Dimension ⩧</text>
<path d="M539 291h6l-3 3zM633 291h6l-3 3zM678 291h6l-3 3zM1104 274h6l-3 3z" fill="#666"/>

<!-- panels -->
<text x="211" y="344">Sheets</text><use href="#v" x="407" y="340"/><use href="#x" x="427" y="339"/><text x="448" y="344">Work area</text>
<g>
<rect x="214" y="356" width="11" height="15" fill="#fff" stroke="#21588f" stroke-dasharray="2 1"/><rect x="220" y="364" width="13" height="10" rx="1" fill="#fff" stroke="#21588f" stroke-width="1.300"/>
<rect x="246" y="356" width="11" height="15" fill="#fff" stroke="#21588f"/><path d="M258 366v10M253 371h10" stroke="#21588f" stroke-width="3"/>
<rect x="276" y="356" width="12" height="15" fill="#dfe4ec" stroke="#21588f"/><rect x="281" y="361" width="12" height="14" fill="#fff" stroke="#21588f" stroke-width="1.500"/>
<rect x="307" y="356" width="11" height="15" fill="#fff" stroke="#21588f" stroke-dasharray="2 1"/><path d="M317 368l7 7M324 368l-7 7" stroke="#21588f" stroke-width="3"/>
<path d="M338 356h17v15h-17zM338 361h17M338 366h17M343 356v15M349 356v15" stroke="#8fa3b8" fill="none" stroke-dasharray="1 1"/><path d="M347 374l3-5 6-6 3 3-6 6z" fill="#21588f"/>
<rect x="369" y="359" width="18" height="11" rx="2" fill="#fff" stroke="#21588f" stroke-width="1.500"/><rect x="372" y="355" width="12" height="4" fill="#fff" stroke="#21588f"/><rect x="372" y="366" width="12" height="8" fill="#ccd3dc" stroke="#21588f"/>
<path d="M408 355l7 9h-4v10h-6v-10h-4z" fill="#fff" stroke="#21588f" stroke-width="1.500"/><path d="M437 355l-3 9-3 4 3 4v3" fill="none" stroke="#21588f" stroke-width="1.500"/>
</g>
<rect x="208" y="380" width="213" height="161" fill="#fff"/><rect x="208" y="400" width="212" height="20" fill="#cce6fa"/>
<path d="M217 388l4.500 4 4.500-4M217 428l4.500 4 4.500-4" fill="none" stroke="#444" stroke-width="1.600"/>
<text x="233" y="394" class="b">Sheet set</text><text x="233" y="434" class="b">Pending assignment</text>
<text x="252" y="414">SW4. Drawing 1</text><text x="252" y="454">SW4. Drawing 2</text><text x="252" y="474">SW4. Drawing 3</text><text x="252" y="494">SW4. Drawing 4</text><text x="252" y="514">SW4. Drawing 5</text><text x="252" y="534">SW4. Drawing 6</text>
<rect x="428" y="397" width="2" height="57" fill="#888"/><path d="M315 545h2M319 545h2M323 545h2M327 545h2" stroke="#aaa" stroke-width="2"/>
<rect x="208" y="549" width="229" height="20" fill="#d6d6d6"/><text x="211" y="563">Layers</text><use href="#v" x="407" y="559"/><use href="#x" x="427" y="558"/>
<path d="M213 582h14M220 575v14" stroke="#333" stroke-width="2.500"/><path d="M237 576l13 13M250 576l-13 13" stroke="#d8636a" stroke-width="3"/><rect x="257" y="572" width="1" height="18" fill="#999"/><path d="M267 586l7-8 7 8zM290 578h14l-7 8z" fill="#333"/><rect x="311" y="572" width="1" height="18" fill="#999"/>
<path d="M321 582l7-5 7 5-7 4zM324 586l4 3 7-3M344 582l7-5 7 5-7 4zM347 586l4 3 7-3" fill="#dfe4ec" stroke="#8fa3b8"/>
<rect x="208" y="596" width="229" height="20" fill="#f0f0f0"/><text x="214" y="609">Active</text><text x="260" y="609">Reference</text><path d="M253.500 596v40M374.500 596v40M405.500 596v40M436.500 596v20" stroke="#ddd"/>
<rect x="208" y="616" width="229" height="59" fill="#fff"/><rect x="208" y="616" width="229" height="20" fill="#e3f0fb"/>
<rect x="225.500" y="620.500" width="10" height="10" fill="#fff" stroke="#333"/><path d="M227 625l3 3 4-6" fill="none" stroke="#111" stroke-width="1.800"/><text x="260" y="630">Layer 0</text>
<path d="M383 626q7-6 14 0-7 6-14 0z" fill="#dfe9f2" stroke="#5c7c9c"/><circle cx="390" cy="626" r="2.500" fill="none" stroke="#5c7c9c"/><rect x="415.500" y="626.500" width="11" height="8" fill="#d8e2ec" stroke="#7e9ab8"/><path d="M418 626v-3q3-4 6-1" fill="none" stroke="#7e9ab8"/>
<path d="M441 650v11" stroke="#aaa" stroke-width="2" stroke-dasharray="2 1.500"/>
<rect x="208" y="683" width="229" height="18" fill="#d6d6d6"/><text x="214" y="696">View on screen</text>
<text x="212" y="722">Colour</text><rect x="253.500" y="704.500" width="180" height="24" rx="2" fill="#fff" stroke="#888"/><text x="259" y="721">Printing colour</text><path d="M421 715l4 4 4-4" fill="none" stroke="#777"/>
<rect x="211.500" y="739.500" width="12" height="12" rx="2" fill="#fff" stroke="#555"/><text x="227" y="750">Represent lines with print thickness</text><path d="M315 761h2M319 761h2M323 761h2M327 761h2" stroke="#aaa" stroke-width="2"/>
<rect x="208" y="765" width="229" height="20" fill="#d6d6d6"/><text x="211" y="779">Categories</text><use href="#v" x="407" y="775"/><use href="#x" x="427" y="774"/>
<rect x="208" y="785" width="229" height="23" fill="#f0f0f0"/><rect x="208" y="808" width="229" height="170" fill="#fff"/><path d="M208 807.500H437M368.500 787v20" stroke="#ddd"/><text x="214" y="801">Category</text><text x="375" y="801">Snappable</text>
<circle cx="224" cy="987" r="7.500" fill="#1a6fc4"/><text x="224" y="992" class="m w" style="font-weight:bold">i</text><text x="240" y="991">Edit - Move</text><circle cx="311" cy="987" r="2.500" fill="#111"/><text x="320" y="991">Select a group of elements.</text>

<!-- paper -->
<text x="1510" y="372" class="e" style="font-size:13px;fill:#333;letter-spacing:.05px">[SW4] DIN A2 - Landscape (594x420) mm</text>
<rect x="678.500" y="377.500" width="832" height="588" fill="#fff" stroke="#222"/>
<rect x="699" y="391" width="793" height="562" fill="url(#gr)"/><rect x="699" y="391" width="793" height="562" fill="url(#gr2)"/>
<path d="M699.500 953V391.500H1492" fill="none" stroke="#4d8aa6"/><path d="M1491.500 391V953.500H699" fill="none" stroke="#4cc3ee"/>

<g class="d">
<!-- column 1 -->
<path class="bl" d="M751.500 470V786M807.500 470V786M911.500 467V793M967.500 467V793"/>
<path d="M734 469.300H861" stroke="#a0a0a0" stroke-width="1.800"/><path class="fl" d="M734 526.500H861M733 591.500H861M733 656.500H861M733 721.500H861M733 786.500H861"/>
<path class="y" d="M779.500 466V786M786.500 470V786M939.500 467V793M946.500 458V793"/>
<use href="#c1" x="751" y="469"/><use href="#c1" x="751" y="527"/><use href="#c1" x="751" y="592"/><use href="#c1" x="751" y="657"/><use href="#c1" x="751" y="722"/>
<text class="h" x="725" y="480">H: 2x#3@20 L=294</text><text class="h" x="725" y="538">H: 2x#3@20 L=294</text><text class="h" x="725" y="603">H: 2x#3@20 L=294</text><text class="h" x="725" y="668">H: 2x#3@20 L=294</text><text class="h" x="725" y="733">H: 2x#3@20 L=294</text>
<text x="741" y="490" class="e">U #3@20 L=84</text><text x="741" y="548" class="e">U #3@20 L=84</text><text x="741" y="613" class="e">U #3@20 L=84</text><text x="741" y="678" class="e">U #3@20 L=84</text><text x="741" y="743" class="e">U #3@20 L=84</text>
<text x="819" y="490">U #3@20 L=84</text><text x="819" y="548">U #3@20 L=84</text><text x="819" y="613">U #3@20 L=84</text><text x="819" y="678">U #3@20 L=84</text><text x="819" y="743">U #3@20 L=84</text>
<text x="819" y="525">Floor 15 (49.00 m)</text><text x="819" y="590">Floor 14 (45.50 m)</text><text x="819" y="655">Floor 13 (42.00 m)</text><text x="819" y="720">Floor 12 (38.50 m)</text><text x="819" y="785">Floor 11 (35.00 m)</text>
<text transform="rotate(-90 785 510)" x="785" y="510" class="m">V: 3x#3@20 L=412</text><text transform="rotate(-90 785 565)" x="785" y="565" class="m">V: 2x#3@20 L=400</text><text transform="rotate(-90 785 630)" x="785" y="630" class="m">V: 2x#3@20 L=400</text><text transform="rotate(-90 785 695)" x="785" y="695" class="m">V: 2x#3@20 L=400</text><text transform="rotate(-90 785 760)" x="785" y="760" class="m">V: 2x#3@20 L=400</text>
<text x="797" y="803" class="m">S1 (3/3)</text><text x="797" y="810" class="m">Scale 1:75</text>
<!-- column 2 -->
<path class="fl" d="M893 467.500H1021M893 532.500H1021M893 598H1021M893 663.500H1021M893 728.500H1021M893 793.500H1021"/>
<use href="#c1" x="911" y="468"/><use href="#c1" x="911" y="533"/><use href="#c1" x="911" y="598"/><use href="#c1" x="911" y="663"/><use href="#c1" x="911" y="728"/>
<text class="h" x="885" y="479">H: 2x#3@20 L=294</text><text class="h" x="885" y="544">H: 2x#3@20 L=294</text><text class="h" x="885" y="609">H: 2x#3@20 L=294</text><text class="h" x="885" y="674">H: 2x#3@20 L=294</text><text class="h" x="885" y="739">H: 2x#3@20 L=294</text>
<text x="901" y="489" class="e">U #3@20 L=84</text><text x="901" y="554" class="e">U #3@20 L=84</text><text x="901" y="619" class="e">U #3@20 L=84</text><text x="901" y="684" class="e">U #3@20 L=84</text><text x="901" y="749" class="e">U #3@20 L=84</text>
<text x="978" y="489">U #3@20 L=84</text><text x="978" y="554">U #3@20 L=84</text><text x="978" y="619">U #3@20 L=84</text><text x="978" y="684">U #3@20 L=84</text><text x="978" y="749">U #3@20 L=84</text>
<text x="978" y="531">Floor 10 (31.50 m)</text><text x="978" y="597">Floor 9 (28.00 m)</text><text x="978" y="662">Floor 8 (24.50 m)</text><text x="978" y="727">Floor 7 (21.00 m)</text><text x="978" y="792">Floor 6 (17.50 m)</text>
<text transform="rotate(-90 945 505)" x="945" y="505" class="m">V: 2x#3@20 L=400</text><text transform="rotate(-90 945 570)" x="945" y="570" class="m">V: 2x#3@20 L=400</text><text transform="rotate(-90 945 635)" x="945" y="635" class="m">V: 2x#3@20 L=400</text><text transform="rotate(-90 945 700)" x="945" y="700" class="m">V: 2x#3@20 L=400</text><text transform="rotate(-90 945 765)" x="945" y="765" class="m">V: 2x#3@20 L=400</text>
<text x="956" y="810" class="m">S1 (2/3)</text><text x="956" y="817" class="m">Scale 1:75</text>
<!-- column 3 -->
<rect x="1082" y="468" width="15" height="328" fill="url(#rb)"/><rect x="1122" y="468" width="15" height="328" fill="url(#rb)"/>
<path d="M1083 457v11M1085 457v11M1087 457v11M1130 457v11M1133 457v11M1135 457v11M1084 518v15M1087 518v15M1090 518v15M1127 518v15M1131 518v15M1082 584h14v15h-14zM1126 584h12v15h-12zM1081 650h14v14h-14zM1125 650h12v14h-12zM1081 802V796h17v6M1084 796v6M1087 796v6M1091 796v6M1121 802V796h17v6M1125 796v6M1129 796v6M1133 796v6" stroke="#6f9e2e" fill="none" stroke-width="1.200"/>
<path class="bl" d="M1081.500 468V796M1137.500 468V796"/>
<path class="fl" d="M1064 468.500H1191M1064 533.500H1191M1064 599.500H1191M1064 664.500H1191M1064 729.500H1191M1064 796.500H1191"/>
<path class="y" style="stroke-width:1.500" d="M1110 468V796M1117.500 458V796"/>
<use href="#c3" x="1082" y="468"/><use href="#c3" x="1082" y="533"/><use href="#c3" x="1082" y="599"/><use href="#c3" x="1082" y="664"/><use href="#c3" x="1082" y="729"/>
<text class="h" x="1055" y="480">H: 2x#3@20 L=209</text><text class="h" x="1055" y="545">H: 2x#3@20 L=169</text><text class="h" x="1055" y="611">H: 2x#3@20 L=158</text><text class="h" x="1055" y="676">H: 2x#3@20 L=138</text><text class="h" x="1055" y="741">H: 2x#3@20 L=128</text>
<text x="1070" y="491" class="e">U #3@20 L=155</text><text x="1070" y="556" class="e">U #3@20 L=195</text><text x="1070" y="622" class="e">U #3@20 L=205</text><text x="1070" y="687" class="e">U #3@20 L=225</text><text x="1070" y="752" class="e">U #3@20 L=235</text>
<text x="1070" y="509" class="e">E: #3@10 L=160, 44</text><text x="1070" y="574" class="e">E: #3@10 L=190, 44</text><text x="1070" y="640" class="e">E: #3@9 L=200, 44</text><text x="1070" y="705" class="e">E: #3@8 L=220, 44</text><text x="1070" y="770" class="e">E: #3@9 L=230, 44</text>
<text x="1070" y="523" class="e">V: 2x4 #5 L=413</text><text x="1070" y="588" class="e">V: 2x5 #5 L=432</text><text x="1070" y="654" class="e">V: 2x5 #5 L=432</text><text x="1070" y="719" class="e">V: 2x5 #5 L=432</text><text x="1070" y="784" class="e">V: 2x6 #5 L=432</text>
<text x="1149" y="491">U #3@20 L=155</text><text x="1149" y="556">U #3@20 L=195</text><text x="1149" y="622">U #3@20 L=205</text><text x="1149" y="687">U #3@20 L=225</text><text x="1149" y="752">U #3@20 L=235</text>
<text x="1149" y="509">E: #3@10 L=160, 44</text><text x="1149" y="574">E: #3@10 L=190, 44</text><text x="1149" y="640">E: #3@9 L=200, 44</text><text x="1149" y="705">E: #3@8 L=220, 44</text><text x="1149" y="770">E: #3@9 L=230, 44</text>
<text x="1149" y="523">V: 2x4 #5 L=413</text><text x="1149" y="588">V: 2x5 #5 L=432</text><text x="1149" y="654">V: 2x5 #5 L=432</text><text x="1149" y="719">V: 2x5 #5 L=432</text><text x="1149" y="784">V: 2x6 #5 L=432</text>
<text x="1149" y="532">Floor 5 (14.00 m)</text><text x="1149" y="598">Floor 4 (10.50 m)</text><text x="1149" y="663">Floor 3 (7.00 m)</text><text x="1149" y="728">Floor 2 (3.50 m)</text><text x="1149" y="795">Floor 1 (0.00 m)</text>
<text transform="rotate(-90 1114 505)" x="1114" y="505" class="m">V: 2x#3@20 L=400</text><text transform="rotate(-90 1114 570)" x="1114" y="570" class="m">V: 2x#3@20 L=400</text><text transform="rotate(-90 1114 635)" x="1114" y="635" class="m">V: 2x#3@20 L=400</text><text transform="rotate(-90 1114 700)" x="1114" y="700" class="m">V: 2x#3@20 L=400</text><text transform="rotate(-90 1114 765)" x="1114" y="765" class="m">V: 2x#3@20 L=400</text>
<text x="1128" y="811" class="m">S1 (1/3)</text><text x="1128" y="817" class="m">Scale 1:75</text>

<!-- section A -->
<g transform="translate(1260 449)"><rect x=".5" y=".5" width="168" height="16" fill="#fff" stroke="#1e2a8e" stroke-width="1.200"/><rect x="2.500" y="2.500" width="164" height="12" fill="#fff" stroke="#f3b71c" stroke-width="2"/><path class="k" d="M-4 8H6M163 8H173M90 2L98-10H110M110-16V-3"/><text x="-6" y="10" class="e">U #3@20 L=84</text><text x="175" y="10">U #3@20 L=84</text><text x="112" y="-13">V: #3@20</text><text x="112" y="-7">H: #3@20</text><text x="103" y="-5" class="m">x2</text><text x="84" y="24" class="m">Floor 6-Floor 15</text><text x="84" y="30" class="m">Scale 1:35</text></g>
<!-- section B -->
<g transform="translate(1255.500 513)"><use href="#sec"/><text x="-7" y="10" class="e">U #3@20 L=155</text><text x="177" y="10">U #3@20 L=155</text><text x="106" y="-13">V: #3@20</text><text x="106" y="-7">H: #3@20</text><text x="97" y="-5" class="m">x2</text><text x="184" y="-17" class="e">EB</text><text x="187" y="-18">V: 2x4 #5</text><text x="187" y="-11">E: #3@10 + 3R #3</text><text x="-18" y="30" class="e">V: 3x4 #5</text><text x="-18" y="36" class="e">E: #3@10 + 3R #3</text><text x="-15" y="29">EB</text><text x="84" y="45" class="m">Floor 5</text><text x="84" y="51" class="m">Scale 1:35</text></g>
<!-- section C -->
<g transform="translate(1256 592)"><use href="#sec"/><text x="-7" y="10" class="e">U #3@20 L=195</text><text x="177" y="10">U #3@20 L=195</text><text x="106" y="-13">V: #3@20</text><text x="106" y="-7">H: #3@20</text><text x="97" y="-5" class="m">x2</text><text x="184" y="-17" class="e">EB</text><text x="187" y="-18">V: 2x5 #5</text><text x="187" y="-11">E: #3@10 + 3R #3</text><text x="-18" y="30" class="e">V: 3x5 #5</text><text x="-18" y="36" class="e">E: #3@10 + 3R #3</text><text x="-15" y="29">EB</text><text x="84" y="45" class="m">Floor 4</text><text x="84" y="51" class="m">Scale 1:35</text></g>
<!-- section D -->
<g transform="translate(1260 669)"><use href="#sec"/><text x="-7" y="10" class="e">U #3@20 L=205</text><text x="177" y="10">U #3@20 L=205</text><text x="106" y="-13">V: #3@20</text><text x="106" y="-7">H: #3@20</text><text x="97" y="-5" class="m">x2</text><text x="184" y="-17" class="e">EB</text><text x="187" y="-18">V: 2x5 #5</text><text x="187" y="-11">E: #3@9 + 3R #3</text><text x="-18" y="30" class="e">V: 3x5 #5</text><text x="-18" y="36" class="e">E: #3@9 + 3R #3</text><text x="-15" y="29">EB</text><text x="84" y="45" class="m">Floor 3</text><text x="84" y="51" class="m">Scale 1:35</text></g>
<!-- section E -->
<g transform="translate(1260 747)"><use href="#sec"/><text x="-7" y="10" class="e">U #3@20 L=235</text><text x="177" y="10">U #3@20 L=226</text><text x="106" y="-13">V: #3@20</text><text x="106" y="-7">H: #3@20</text><text x="97" y="-5" class="m">x2</text><text x="184" y="-17" class="e">EB</text><text x="187" y="-18">V: 2x5 #5</text><text x="187" y="-11">E: #3@8 + 3R #3</text><text x="-18" y="30" class="e">V: 3x5 #5</text><text x="-18" y="36" class="e">E: #3@8 + 3R #3</text><text x="-15" y="29">EB</text><text x="84" y="45" class="m">Floor 2</text><text x="84" y="51" class="m">Scale 1:35</text></g>
<!-- section F -->
<g transform="translate(1260 826)"><use href="#sec"/><text x="-7" y="10" class="e">U #3@20 L=236</text><text x="177" y="10">U #3@20 L=236</text><text x="106" y="-13">V: #3@20</text><text x="106" y="-7">H: #3@20</text><text x="97" y="-5" class="m">x2</text><text x="184" y="-17" class="e">EB</text><text x="187" y="-18">V: 2x6 #5</text><text x="187" y="-11">E: #3@9 + 4R #3</text><text x="-18" y="30" class="e">V: 3x6 #5</text><text x="-18" y="36" class="e">E: #3@9 + 4R #3</text><text x="-15" y="29">EB</text><text x="84" y="45" class="m">Floor 1</text><text x="84" y="51" class="m">Scale 1:35</text></g>
<!-- title block -->
<path d="M1314.500 953V922H1491M1314 932.500H1462M1314 942.500H1462M1405.500 932V953M1462.500 922V953" fill="none" stroke="#111"/>
<text x="1317" y="928">Project</text><text x="1317" y="938">Title</text><text x="1408" y="938">Status</text><text x="1317" y="948">Number</text><text x="1408" y="948">Date</text>
<path d="M1467 926L1486 934Q1490 937.500 1486 941L1467 949Q1464 949 1464 946V929Q1464 926 1467 926Z" fill="#d8232f"/><text x="1476" y="941" class="m" style="font-size:9px;font-weight:bold;fill:#fff">cype</text>
</g>

<!-- callouts -->
<rect x="822.500" y="46.500" width="118.500" height="99.500" fill="none" stroke="#c8202f" stroke-width="3"/>
<path d="M917 110C1010 133 1135 195 1176 375" fill="none" stroke="#c8202f" stroke-width="3"/>
<path d="M1165 370h20l-8.500 20z" fill="#c8202f"/>
<rect x="0" y="1030" width="1920" height="2" fill="#ddd"/>
</svg>
</body></html>
